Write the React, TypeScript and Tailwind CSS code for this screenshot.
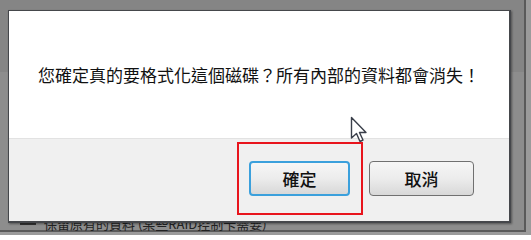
import React from "react";

const FONT = { fontFamily: '"Noto Sans CJK TC", "Noto Sans", sans-serif' };

function Cursor() {
  return (
    <svg width="18" height="28" viewBox="0 0 18 28" className="absolute left-[350px] top-[116px]">
      <path
        d="M1.5 1.5 L1.5 22 L6.5 17.5 L10 25.5 L13 24 L9.5 16.5 L16 16.5 Z"
        fill="#ffffff"
        stroke="#3a3f4a"
        strokeWidth="1.4"
        strokeLinejoin="round"
      />
    </svg>
  );
}

export default function App() {
  return (
    <div className="relative w-[531px] h-[235px] overflow-hidden bg-[#9b9b9b]" style={FONT}>
      {/* page underneath the modal */}
      <div className="w-[526px] h-[232px] flex flex-col bg-[#868686] border-r-2 border-b-2 border-[#5a5a5a]">
        <div className="h-[72px] bg-[#858585]" />
        <div className="flex-1 bg-[#8d8d8d] flex flex-col justify-end">
          <div className="flex items-center gap-2 pl-[20px] pb-[1px] h-[12px] text-[13px] leading-none text-[#222]">
            <span className="w-[16px] h-[2px] bg-[#333]" />
            <span>保留原有的資料 (某些RAID控制卡需要)</span>
          </div>
        </div>
      </div>

      {/* confirm dialog */}
      <div className="absolute left-[8px] top-[10px] w-[503px] h-[213px] flex flex-col border-l border-t border-r-2 border-b-2 border-[#45474b] bg-white shadow-[1px_1px_2px_rgba(0,0,0,0.4)]">
        <div className="h-[127px] flex items-center justify-center text-[17px] leading-none text-[#111]">
          您確定真的要格式化這個磁碟？所有內部的資料都會消失！
        </div>
        <div className="flex-1 bg-[#f0f0f0] border-t border-[#e2e2e2] flex justify-end gap-[19px] pt-[22px] pr-[35px]">
          <button className="w-[101px] h-[35px] rounded-[4px] border-2 border-[#3ba0dc] bg-gradient-to-b from-[#f6f6f6] via-[#ececec] to-[#d8d8d8] text-[17px] font-medium text-[#111] flex items-center justify-center">
            確定
          </button>
          <button className="w-[105px] h-[35px] rounded-[4px] border border-[#707070] bg-gradient-to-b from-[#f6f6f6] via-[#ececec] to-[#d8d8d8] text-[17px] font-medium text-[#111] flex items-center justify-center">
            取消
          </button>
        </div>
      </div>

      {/* red highlight annotation */}
      <div className="absolute left-[237px] top-[142px] w-[126px] h-[73px] border-2 border-[#e8141c]" />

      <Cursor />
    </div>
  );
}
